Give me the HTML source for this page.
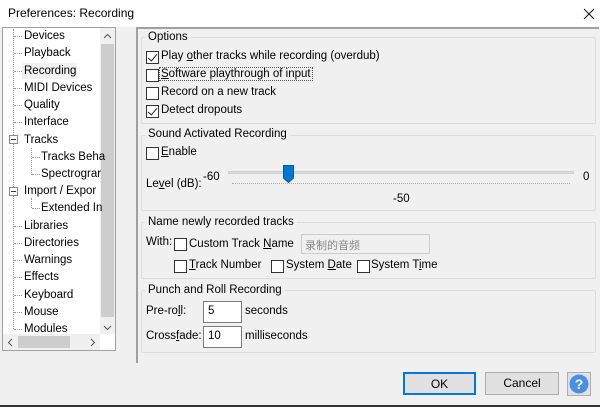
<!DOCTYPE html>
<html><head><style>
*{box-sizing:border-box;margin:0;padding:0}
body{width:600px;height:407px;background:#f0f0f0;font-family:"Liberation Sans","Noto Sans CJK SC",sans-serif;font-size:11.5px;color:#000;position:relative;overflow:hidden}
.a{position:absolute;white-space:nowrap}
.cb{position:absolute;width:13px;height:13px;border:1px solid #333;background:#fff}
.cb.c::after{content:"";position:absolute;left:3px;top:0px;width:4px;height:8px;border:solid #222;border-width:0 1.5px 1.5px 0;transform:rotate(40deg)}
.grp{position:absolute;border:1px solid #dcdcdc;border-radius:2px}
.gt{position:absolute;background:#f0f0f0;padding:0 3px;white-space:nowrap}
.t{position:absolute;white-space:nowrap;line-height:15px}
.h{position:absolute;border-top:1px dotted #999;width:8px}
.in{position:absolute;background:#fff;border:1px solid #7a7a7a;padding:3px 4px;height:22px}
.btn{position:absolute;height:23px;border:1px solid #adadad;background:#e1e1e1;text-align:center;line-height:21px;font-size:12px}
</style></head><body>
<div class="a" style="left:0;top:0;width:600px;height:27px;background:#fff"></div>
<div class="a" style="left:8px;top:6px;font-size:12px">Preferences: Recording</div>
<svg class="a" style="left:583px;top:8px" width="12" height="12"><path d="M1 1L11 11M11 1L1 11" stroke="#111" stroke-width="1"/></svg>

<!-- left tree -->
<div class="a" style="left:2px;top:27px;width:114px;height:324px;background:#fff;border:1px solid #a0a0a0"></div>
<div class="a" style="left:100px;top:28px;width:15px;height:306px;background:#f0f0f0"></div>
<div class="a" style="left:101px;top:44px;width:13px;height:273px;background:#cdcdcd"></div>
<svg class="a" style="left:103px;top:33px" width="9" height="6"><path d="M1 5L4.5 1.5L8 5" fill="none" stroke="#555"/></svg>
<svg class="a" style="left:103px;top:325px" width="9" height="6"><path d="M1 1L4.5 4.5L8 1" fill="none" stroke="#555"/></svg>
<div class="a" style="left:3px;top:334px;width:97px;height:16px;background:#f0f0f0"></div>
<div class="a" style="left:18px;top:336px;width:52px;height:12px;background:#cdcdcd"></div>
<svg class="a" style="left:7px;top:338px" width="6" height="9"><path d="M5 1L1.5 4.5L5 8" fill="none" stroke="#555"/></svg>
<svg class="a" style="left:90px;top:338px" width="6" height="9"><path d="M1 1L4.5 4.5L1 8" fill="none" stroke="#555"/></svg>
<div class="a" style="left:13px;top:29px;height:300px;border-left:1px dotted #999"></div>
<div class="a" style="left:22px;top:63px;width:55px;height:16px;background:#f0f0f0"></div>
<div class="h" style="left:14px;top:36px"></div><div class="t" style="left:24px;top:29px">Devices</div>
<div class="h" style="left:14px;top:53px"></div><div class="t" style="left:24px;top:46px">Playback</div>
<div class="h" style="left:14px;top:71px"></div><div class="t" style="left:24px;top:64px">Recording</div>
<div class="h" style="left:14px;top:88px"></div><div class="t" style="left:24px;top:81px">MIDI Devices</div>
<div class="h" style="left:14px;top:105px"></div><div class="t" style="left:24px;top:98px">Quality</div>
<div class="h" style="left:14px;top:122px"></div><div class="t" style="left:24px;top:115px">Interface</div>
<div class="t" style="left:24px;top:133px">Tracks</div>
<div class="h" style="left:32px;top:157px"></div><div class="t" style="left:41px;top:150px">Tracks Beha</div>
<div class="h" style="left:32px;top:174px"></div><div class="t" style="left:41px;top:167px">Spectrograr</div>
<div class="t" style="left:24px;top:184px">Import / Expor</div>
<div class="h" style="left:32px;top:208px"></div><div class="t" style="left:41px;top:201px">Extended In</div>
<div class="h" style="left:14px;top:226px"></div><div class="t" style="left:24px;top:219px">Libraries</div>
<div class="h" style="left:14px;top:243px"></div><div class="t" style="left:24px;top:236px">Directories</div>
<div class="h" style="left:14px;top:260px"></div><div class="t" style="left:24px;top:253px">Warnings</div>
<div class="h" style="left:14px;top:277px"></div><div class="t" style="left:24px;top:270px">Effects</div>
<div class="h" style="left:14px;top:295px"></div><div class="t" style="left:24px;top:288px">Keyboard</div>
<div class="h" style="left:14px;top:312px"></div><div class="t" style="left:24px;top:305px">Mouse</div>
<div class="h" style="left:14px;top:329px"></div><div class="t" style="left:24px;top:322px">Modules</div>
<div class="a" style="left:9px;top:135px;width:9px;height:9px;border:1px solid #888;background:#fff"><div style="position:absolute;left:1px;top:3px;width:5px;border-top:1px solid #333"></div></div>
<div class="a" style="left:9px;top:187px;width:9px;height:9px;border:1px solid #888;background:#fff"><div style="position:absolute;left:1px;top:3px;width:5px;border-top:1px solid #333"></div></div>
<div class="a" style="left:31px;top:148px;height:27px;border-left:1px dotted #999"></div>
<div class="a" style="left:31px;top:198px;height:10px;border-left:1px dotted #999"></div>

<!-- right panel -->
<div class="a" style="left:136px;top:27px;width:463px;height:336px;border-top:2px solid #a0a0a0;border-left:2px solid #a0a0a0"></div>

<div class="grp" style="left:141px;top:37px;width:455px;height:87px"></div>
<div class="gt" style="left:145px;top:31px">Options</div>
<div class="cb c" style="left:146px;top:51px"></div><div class="a" style="left:161px;top:50px">Play <u>o</u>ther tracks while recording (overdub)</div>
<div class="cb" style="left:146px;top:69px"></div><div class="a" style="left:159px;top:67px;border:1px dotted #555;padding:0 1px"><u>S</u>oftware playthrough of input</div>
<div class="cb" style="left:146px;top:87px"></div><div class="a" style="left:161px;top:86px">Record on a new track</div>
<div class="cb c" style="left:146px;top:105px"></div><div class="a" style="left:161px;top:104px">Detect dropouts</div>

<div class="grp" style="left:141px;top:135px;width:455px;height:76px"></div>
<div class="gt" style="left:145px;top:128px">Sound Activated Recording</div>
<div class="cb" style="left:146px;top:147px"></div><div class="a" style="left:161px;top:146px"><u>E</u>nable</div>
<div class="a" style="left:146px;top:178px">Le<u>v</u>el (dB):</div>
<div class="a" style="left:203px;top:171px">-60</div>
<div class="a" style="left:583px;top:171px">0</div>
<div class="a" style="left:228px;top:171px;width:346px;height:3px;background:#dcdcdc;border:1px solid #d0d0d0"></div>
<div class="a" style="left:232px;top:183px;width:338px;border-top:1px dotted #aaa"></div>
<svg class="a" style="left:283px;top:165px" width="11" height="18"><path d="M0.5 0.5H10.5V13L5.5 17.5L0.5 13Z" fill="#0078d7" stroke="#005a9e"/></svg>
<div class="a" style="left:393px;top:193px">-50</div>

<div class="grp" style="left:141px;top:222px;width:455px;height:57px"></div>
<div class="gt" style="left:145px;top:216px">Name newly recorded tracks</div>
<div class="a" style="left:146px;top:236px">With:</div>
<div class="cb" style="left:174px;top:238px"></div><div class="a" style="left:189px;top:238px">Custom Track <u>N</u>ame</div>
<div class="a" style="left:301px;top:234px;width:129px;height:20px;border:1px solid #ccc;background:#f0f0f0;color:#888;padding:2px 3px;font-size:11px">录制的音频</div>
<div class="cb" style="left:174px;top:260px"></div><div class="a" style="left:189px;top:259px"><u>T</u>rack Number</div>
<div class="cb" style="left:271px;top:260px"></div><div class="a" style="left:286px;top:259px">System <u>D</u>ate</div>
<div class="cb" style="left:357px;top:260px"></div><div class="a" style="left:371px;top:259px">System T<u>i</u>me</div>

<div class="grp" style="left:141px;top:290px;width:455px;height:63px"></div>
<div class="gt" style="left:145px;top:284px">Punch and Roll Recording</div>
<div class="a" style="left:146px;top:305px">Pre-ro<u>l</u>l:</div>
<div class="in" style="left:203px;top:301px;width:39px">5</div>
<div class="a" style="left:245px;top:305px">seconds</div>
<div class="a" style="left:146px;top:330px">Cross<u>f</u>ade:</div>
<div class="in" style="left:203px;top:326px;width:39px">10</div>
<div class="a" style="left:245px;top:330px">milliseconds</div>

<div class="btn" style="left:403px;top:372px;width:73px;border:2px solid #0078d7">OK</div>
<div class="btn" style="left:485px;top:372px;width:74px">Cancel</div>
<div class="btn" style="left:567px;top:372px;width:24px;height:24px;padding:1px">
<svg width="20" height="20" style="display:block;margin:0 auto"><circle cx="10" cy="10" r="9.5" fill="#4a8fe6"/><text x="10" y="15" text-anchor="middle" fill="#fff" font-size="14" font-weight="bold" font-family="Liberation Sans">?</text></svg></div>
<div class="a" style="left:0;top:405px;width:600px;height:2px;background:#333"></div>
</body></html>
